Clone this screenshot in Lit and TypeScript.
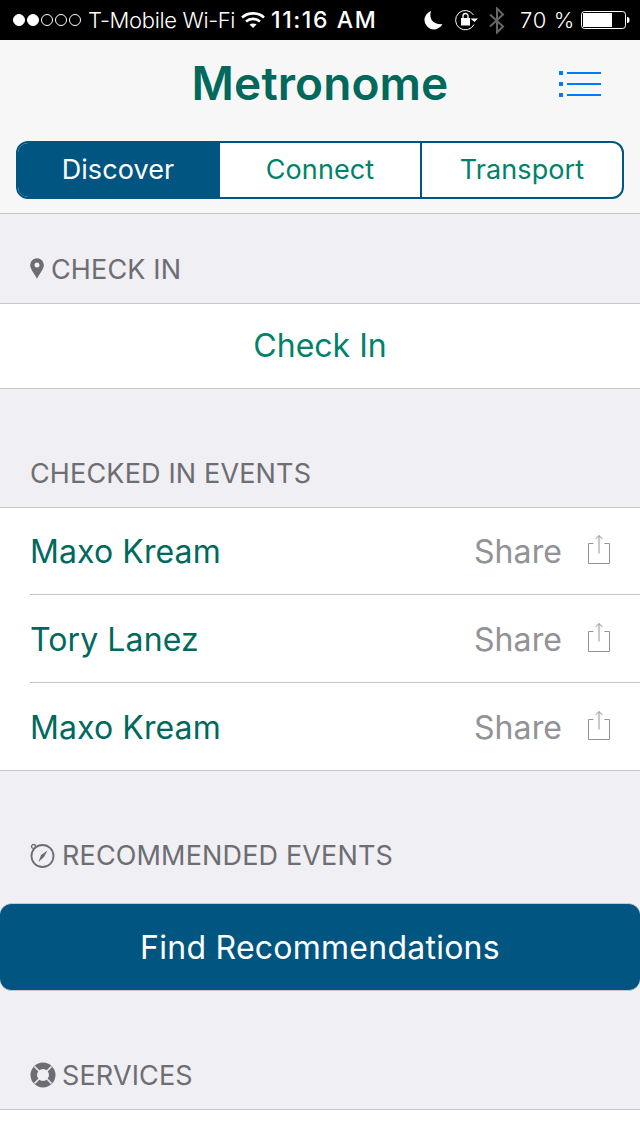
import { LitElement, html, css, svg } from "lit";
import { customElement } from "lit/decorators.js";

const shareIcon = svg`<svg class="share-icon" width="24" height="31" viewBox="0 0 24 31" fill="none" stroke="#929297" stroke-width="1"><path d="M6.500 9.500H1.500V29.500H22.500V9.500H17.500"/><path d="M12 1.500V19.500"/><path d="M8.500 5 12 1.500 15.500 5"/></svg>`;

@customElement("app-root")
export class AppRoot extends LitElement {
  static styles = css`
    :host { display: block; width: 640px; height: 1136px; overflow: hidden; background: #efeff4; font-family: Inter, "Liberation Sans", sans-serif; }
    .status { height: 40px; background: #000; color: #fff; display: flex; align-items: center; font-size: 22px; padding: 0 0 0 13px; box-sizing: border-box; white-space: nowrap; }
    .dots { display: flex; gap: 2px; width: 68px; }
    .dot { width: 12px; height: 12px; border-radius: 50%; box-sizing: border-box; border: 1px solid #fff; }
    .dot.on { background: #fff; }
    .carrier { margin-left: 7px; width: 146px; letter-spacing: -0.35px; font-weight: 300; }
    .wifi { margin-left: 7px; }
    .time { margin-left: 6px; width: 153px; font-weight: 500; font-size: 23px; letter-spacing: 1.6px; }
    .lock { margin-left: 12px; }
    .bt { margin-left: 10px; }
    .pct { margin-left: 15px; width: 60px; font-weight: 300; letter-spacing: 0.7px; }
    .batt { margin-left: 1px; }
    .nav { height: 174px; box-sizing: border-box; background: #f7f7f7; border-bottom: 1px solid #c4c4c6; padding: 0 16px; position: relative; }
    .title-row { height: 101px; box-sizing: border-box; padding-bottom: 16px; display: flex; align-items: center; justify-content: center; }
    .title { font-size: 46px; font-weight: 600; color: #00695c; letter-spacing: 0.1px; line-height: 56px; }
    .menu { position: absolute; top: 30px; left: 559px; }
    .seg { display: grid; grid-template-columns: 200px 202px 1fr; height: 58px; box-sizing: border-box; border: 2px solid #005581; border-radius: 12px; background: #fff; overflow: hidden; }
    .seg div { display: flex; align-items: center; justify-content: center; box-sizing: border-box; padding-bottom: 2px; font-size: 27px; color: #00826a; letter-spacing: 0.1px; border-left: 2px solid #005581; }
    .seg div.active { background: #005581; color: #fff; border-left: 0; }
    .header { display: flex; align-items: flex-end; color: #6d6d72; font-size: 27px; padding-left: 30px; box-sizing: border-box; letter-spacing: 0.15px; gap: 6px; }
    .header span { line-height: 32px; }
    .header svg { margin-bottom: 4px; flex: none; }
    .header svg.pin { margin-bottom: 7px; }
    .h1 { height: 89px; padding-bottom: 17px; }
    .h2 { height: 118px; padding-bottom: 17px; }
    .h3 { height: 132px; padding-bottom: 31px; }
    .h4 { height: 118px; padding-bottom: 17px; }
    .checkin { height: 86px; box-sizing: border-box; padding-bottom: 2px; background: #fff; border-top: 1px solid #c8c7cc; border-bottom: 1px solid #c8c7cc; display: flex; align-items: center; justify-content: center; font-size: 32px; color: #00826a; }
    .list { background: #fff; border-top: 1px solid #c8c7cc; border-bottom: 1px solid #c8c7cc; padding-left: 30px; }
    .row { height: 86px; display: flex; align-items: center; font-size: 32px; color: #00695c; padding-right: 29px; box-sizing: border-box; }
    .row + .row { height: 88px; border-top: 1px solid #c8c7cc; padding-top: 1px; }
    .row .name { flex: 1; letter-spacing: 0.1px; }
    .row .share { color: #929297; margin-right: 25px; letter-spacing: 0.1px; }
    .share-icon { margin-top: -4px; display: block; }
    .find { height: 88px; box-sizing: border-box; background: #005581; border-top: 1px solid #c8c7cc; border-bottom: 1px solid #c8c7cc; border-radius: 12px; color: #fff; font-size: 32px; letter-spacing: 0.25px; display: flex; align-items: center; justify-content: center; }
    .bottom { height: 27px; background: #fff; border-top: 1px solid #c8c7cc; }
  `;

  render() {
    return html`
      <div class="status">
        <div class="dots"><div class="dot on"></div><div class="dot on"></div><div class="dot"></div><div class="dot"></div><div class="dot"></div></div>
        <span class="carrier">T-Mobile Wi-Fi</span>
        <svg class="wifi" width="24" height="18" viewBox="0 0 24 18" fill="none" stroke="#fff" stroke-width="2.600"><path d="M1 6.500C7 1 17 1 23 6.500"/><path d="M5 10.500C9 7 15 7 19 10.500"/><path d="M12 17 8.500 13.500C10.500 12 13.500 12 15.500 13.500Z" fill="#fff" stroke="none"/></svg>
        <span class="time">11:16 AM</span>
        <svg class="moon" width="19" height="20" viewBox="0 0 20 20"><path d="M7.500 0.500C5 7 8 15 19.500 14.500C17.500 18 13.500 20 10.500 20C5 20 0.500 15 0.500 10C0.500 6 3.500 2 7.500 0.500Z" fill="#fff"/></svg>
        <svg class="lock" width="24" height="22" viewBox="0 0 24 22" fill="none"><path d="M19 15.500A9.700 9.700 0 1 1 18.500 6" stroke="#fff" stroke-width="1"/><path d="M15.500 9.500H23L19.500 13Z" fill="#fff"/><rect x="6" y="9" width="9" height="7.500" fill="#fff"/><path d="M8 9V7A2.500 2.500 0 0 1 13 7V9" stroke="#fff" stroke-width="1.300"/></svg>
        <svg class="bt" width="16" height="27" viewBox="0 0 16 27" fill="none" stroke="#666" stroke-width="2"><path d="M1 7.500 14 19.500 8 25.500V1.500L14 7.500 1 19.500"/></svg>
        <span class="pct">70 %</span>
        <svg class="batt" width="50" height="20" viewBox="0 0 50 20"><rect x="0.500" y="1.500" width="44" height="17" rx="3" fill="none" stroke="#fff"/><rect x="2" y="3" width="29" height="14" fill="#fff"/><path d="M46 7C48 7 48.500 8 48.500 10S48 13 46 13Z" fill="#fff"/></svg>
      </div>
      <div class="nav">
        <div class="title-row"><span class="title">Metronome</span></div>
        <svg class="menu" width="43" height="28" viewBox="0 0 43 28" fill="#007aff"><rect x="0" y="1" width="4" height="4"/><rect x="0" y="12" width="4" height="4"/><rect x="0" y="23" width="4" height="4"/><rect x="8" y="2" width="34" height="2"/><rect x="8" y="13" width="34" height="2"/><rect x="8" y="24" width="34" height="2"/></svg>
        <div class="seg"><div class="active">Discover</div><div>Connect</div><div>Transport</div></div>
      </div>
      <div class="header h1">
        <svg class="pin" width="15" height="21" viewBox="0 0 15 21"><path fill-rule="evenodd" d="M7 0.200A6.900 6.900 0 0 1 13.900 7.100C13.900 11 9.500 16 7 20.800 4.500 16 0.100 11 0.100 7.100A6.900 6.900 0 0 1 7 0.200ZM7 4.600A2.500 2.500 0 1 0 7 9.600 2.500 2.500 0 1 0 7 4.600Z" fill="#6d6d72"/></svg>
        <span>CHECK IN</span>
      </div>
      <div class="checkin">Check In</div>
      <div class="header h2"><span>CHECKED IN EVENTS</span></div>
      <div class="list">
        ${["Maxo Kream", "Tory Lanez", "Maxo Kream"].map(
          (n) => html`<div class="row"><span class="name">${n}</span><span class="share">Share</span>${shareIcon}</div>`
        )}
      </div>
      <div class="header h3">
        <svg width="26" height="26" viewBox="0 0 26 26" fill="none" stroke="#6d6d72" stroke-width="1.800"><circle cx="12.500" cy="14" r="11"/><circle cx="3.500" cy="4.500" r="2" stroke-width="1.300"/><path d="M17.500 8.500 14 15 8.500 20 11 13Z" fill="#6d6d72" stroke="none"/></svg>
        <span>RECOMMENDED EVENTS</span>
      </div>
      <div class="find">Find Recommendations</div>
      <div class="header h4">
        <svg width="26" height="26" viewBox="0 0 26 26" fill="none"><circle cx="13" cy="13" r="9.250" stroke="#6d6d72" stroke-width="6.500"/><path d="M4.500 4.500 9.200 9.200M21.500 4.500 16.800 9.200M4.500 21.500 9.200 16.800M21.500 21.500 16.800 16.800" stroke="#efeff4" stroke-width="1.600"/></svg>
        <span>SERVICES</span>
      </div>
      <div class="bottom"></div>
    `;
  }
}
